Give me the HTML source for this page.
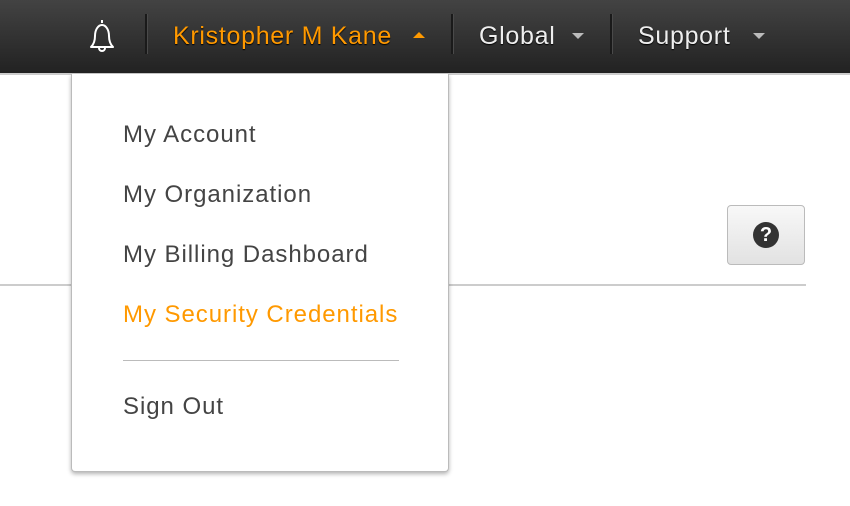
<!DOCTYPE html>
<html><head><style>
body{margin:0;width:850px;height:506px;background:#fff;position:relative;overflow:hidden;font-family:"Liberation Sans",sans-serif}
.hdr{position:absolute;left:0;top:0;width:850px;height:73px;background:linear-gradient(#434343,#222);border-bottom:2px solid #ccc}
.sep{position:absolute;top:14px;width:2px;height:40px;background:#1a1a1a;border-right:1px solid #4a4a4a}
.ht{position:absolute;top:21px;font-size:25px;line-height:30px;letter-spacing:0.7px;text-shadow:0 1px 1px #000}
.car{position:absolute;width:0;height:0;border-left:6px solid transparent;border-right:6px solid transparent}
.dd{position:absolute;left:71px;top:74px;width:376px;height:397px;background:#fff;border:1px solid #bbb;border-top:none;border-radius:0 0 4px 4px;box-shadow:0 2px 4px rgba(0,0,0,.3)}
.it{position:absolute;left:51px;font-size:24px;color:#444;line-height:30px;letter-spacing:0.95px}
</style></head><body>
<div style="position:absolute;left:0;top:284px;width:806px;height:2px;background:#ccc"></div>
<div style="position:absolute;left:727px;top:205px;width:76px;height:58px;border:1px solid #bbb;border-radius:4px;background:linear-gradient(#f8f8f8,#e2e2e2)">
<div style="position:absolute;left:25px;top:16px;width:26px;height:26px;border-radius:50%;background:#333;color:#fff;font-weight:bold;font-size:20px;line-height:26px;text-align:center">?</div></div>
<div class="hdr">
<svg style="position:absolute;left:85px;top:17px" width="34" height="36" viewBox="0 0 34 36"><path d="M17 3v3M6 30c3-3 4-6 4-11 0-6 3-11 7-11s7 5 7 11c0 5 1 8 4 11zM14 31a3 3 0 0 0 6 0" fill="none" stroke="#fff" stroke-width="2" stroke-linejoin="round"/></svg>
<div class="sep" style="left:145px"></div>
<div class="ht" style="left:173px;color:#f90">Kristopher M Kane</div>
<div class="car" style="left:413px;top:32px;border-bottom:6px solid #f90"></div>
<div class="sep" style="left:451px"></div>
<div class="ht" style="left:479px;color:#eee">Global</div>
<div class="car" style="left:572px;top:33px;border-top:6px solid #bbb"></div>
<div class="sep" style="left:610px"></div>
<div class="ht" style="left:638px;color:#eee">Support</div>
<div class="car" style="left:753px;top:33px;border-top:6px solid #bbb"></div>
</div>
<div class="dd">
<div class="it" style="top:46px">My Account</div>
<div class="it" style="top:106px">My Organization</div>
<div class="it" style="top:166px">My Billing Dashboard</div>
<div class="it" style="top:226px;color:#f90">My Security Credentials</div>
<div style="position:absolute;left:51px;top:286px;width:276px;height:1px;background:#bbb"></div>
<div class="it" style="top:318px">Sign Out</div>
</div>
</body></html>
